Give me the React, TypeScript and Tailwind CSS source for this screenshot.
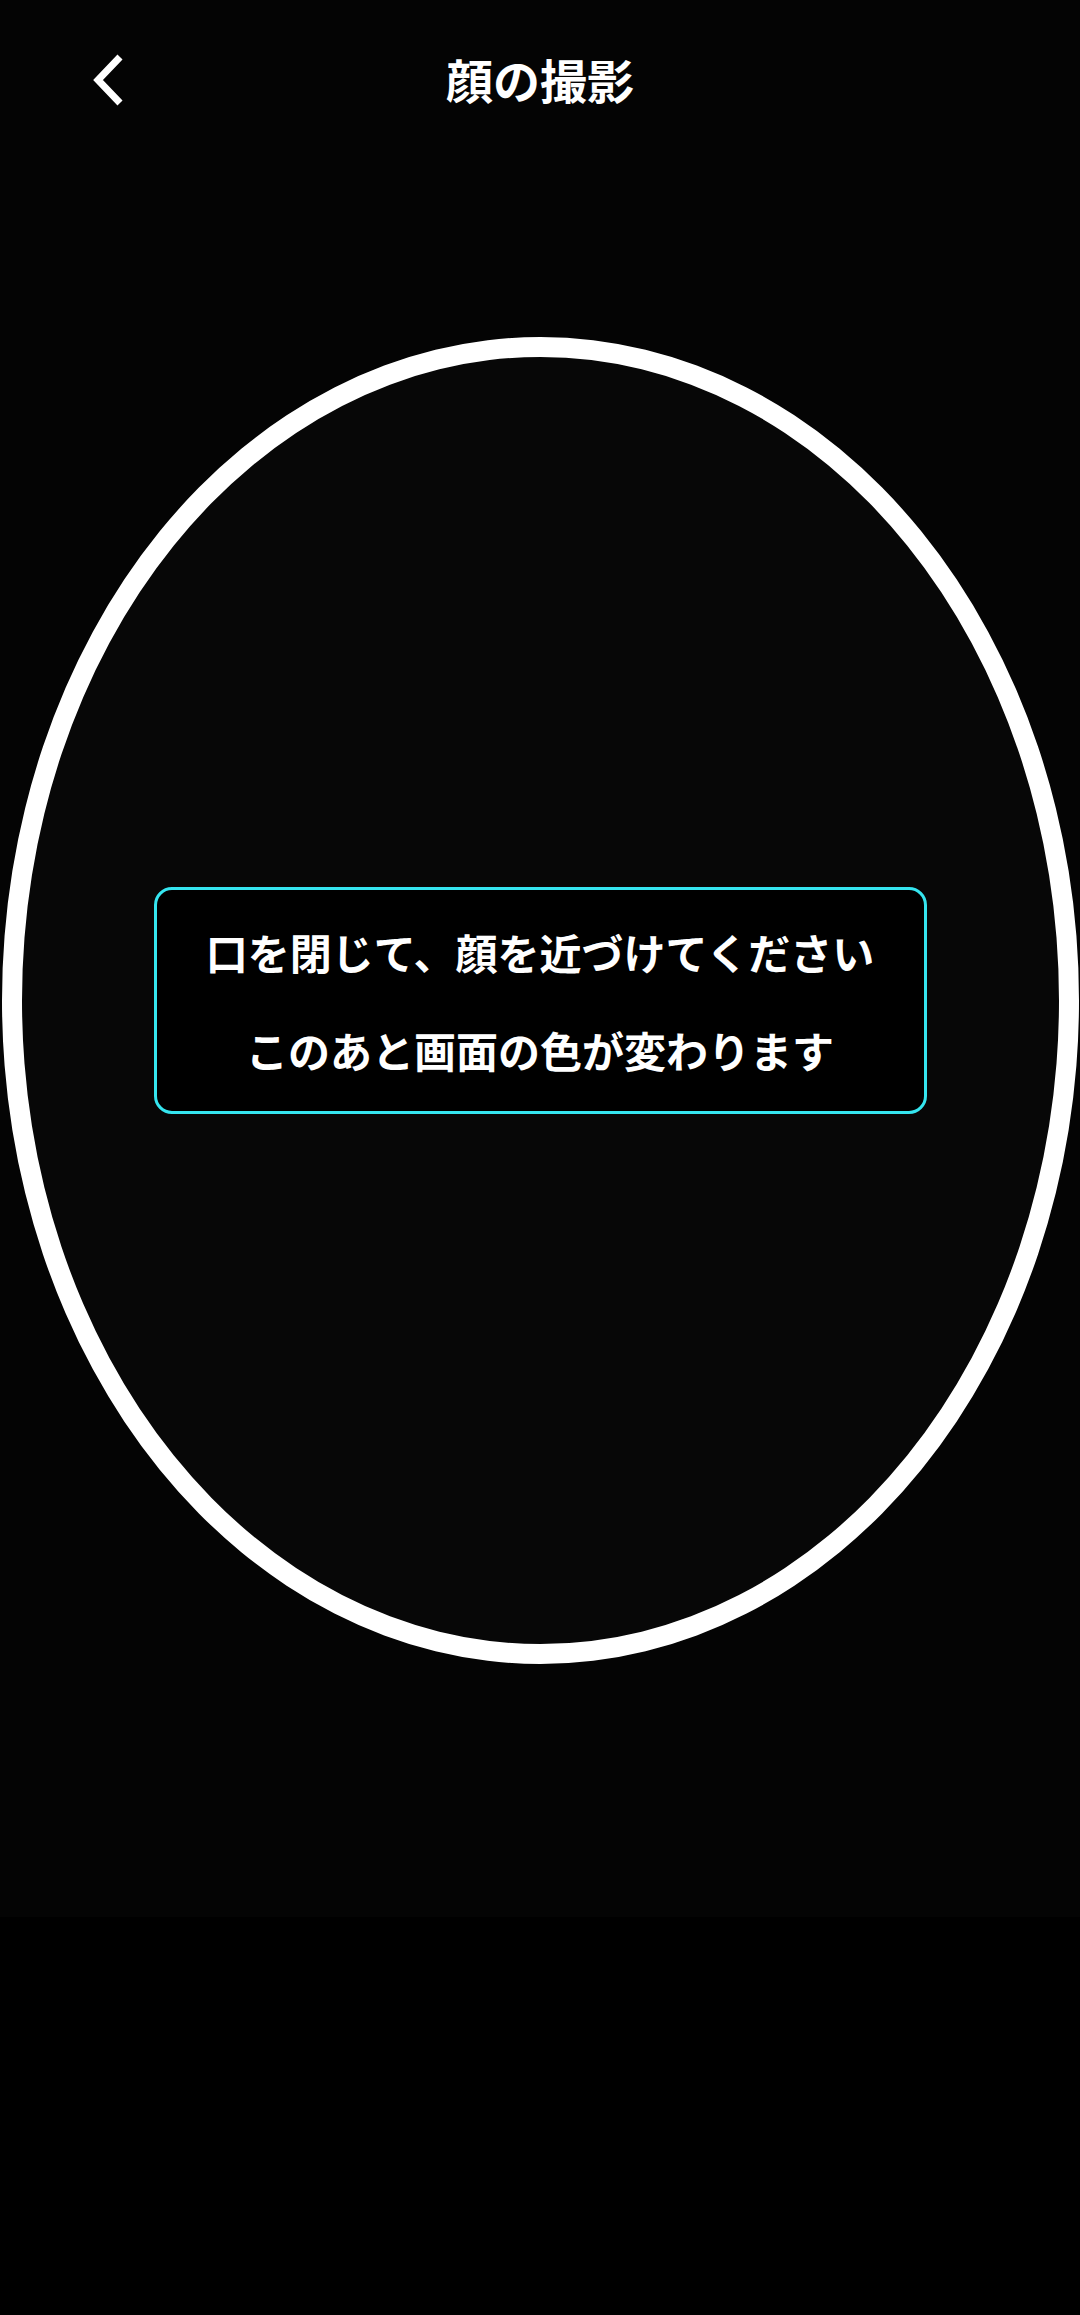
export default function App() {
  return (
    <div className="w-[1080px] h-[2315px] bg-black flex flex-col font-['Noto_Sans_CJK_JP','Noto_Sans',sans-serif] text-white">
      <div className="h-[1917px] bg-[#040404] flex flex-col">
        <header className="relative h-[160px] flex items-center justify-center">
          <button className="absolute left-[88px] top-[50px] w-[44px] h-[60px] flex items-center justify-center">
            <svg width="44" height="60" viewBox="0 0 44 60" fill="none">
              <polyline
                points="32,7 10,30 32,53"
                stroke="white"
                strokeWidth="7"
                strokeLinejoin="miter"
              />
            </svg>
          </button>
          <h1 className="-mt-[4px] text-[47px] font-bold leading-none">顔の撮影</h1>
        </header>

        <div className="mt-[177px] mx-auto w-[1077px] h-[1327px] rounded-[50%] border-[20px] border-white bg-[#070707] flex items-center justify-center">
          <div className="w-[773px] h-[227px] rounded-[18px] border-[3px] border-[#35e5ef] bg-black flex flex-col items-center justify-center gap-[48px]">
            <p className="text-[42px] font-bold leading-[50px]">口を閉じて、顔を近づけてください</p>
            <p className="text-[42px] font-bold leading-[50px]">このあと画面の色が変わります</p>
          </div>
        </div>
      </div>
    </div>
  )
}
